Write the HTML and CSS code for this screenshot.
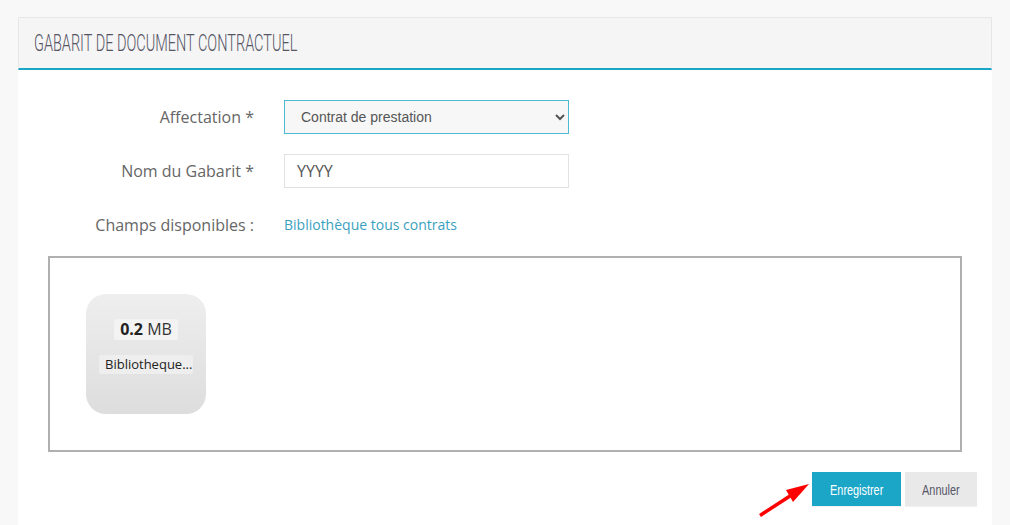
FILE: index.html
```html
<!DOCTYPE html>
<html lang="fr">
<head>
<meta charset="utf-8">
<title>Gabarit de document contractuel</title>
<link rel="stylesheet" href="styles.css">
</head>
<body>
<main class="panel">
  <header class="panel-head"><h1 class="panel-title">GABARIT DE DOCUMENT CONTRACTUEL</h1></header>
  <form class="panel-body">
    <div class="row">
      <label class="label">Affectation *</label>
      <select class="control select"><option>Contrat de prestation</option></select>
    </div>
    <div class="row">
      <label class="label">Nom du Gabarit *</label>
      <input class="control input" type="text" value="YYYY">
    </div>
    <div class="row">
      <span class="label">Champs disponibles :</span>
      <a class="link" href="#">Bibliothèque tous contrats</a>
    </div>
    <div class="dropzone">
      <div class="file">
        <div class="size"><strong>0.2</strong> MB</div>
        <div class="name">Bibliotheque...</div>
      </div>
    </div>
    <div class="actions">
      <svg class="arrow" width="54" height="42" viewBox="0 0 54 42" aria-hidden="true">
        <path d="M2 38.5 L32 19" stroke="#fe0000" stroke-width="3.5" fill="none"/>
        <path d="M51 7 L28 13 L35 25 Z" fill="#fe0000"/>
      </svg>
      <button class="btn btn-primary" type="button"><span class="btn-text">Enregistrer</span></button>
      <button class="btn btn-muted" type="button"><span class="btn-text">Annuler</span></button>
    </div>
  </form>
</main>
</body>
</html>
```
FILE: styles.css
```css
* { box-sizing: border-box; }
html, body { height: 100%; }
body {
  margin: 0;
  padding: 17px 18px 0;
  background: #f8f8f8;
  overflow: hidden;
  font-family: "Open Sans", sans-serif;
  color: #666;
}
.panel { background: #fff; height: 520px; }
.panel-head {
  height: 53px;
  padding: 0 15px;
  display: flex;
  align-items: center;
  background: #f5f5f5;
  border: 1px solid #e7e7e7;
  border-bottom: 2px solid #1ba6c7;
}
.panel-title {
  margin: 0;
  font-family: "Roboto", sans-serif;
  font-weight: 300;
  font-size: 23px;
  white-space: nowrap;
  color: #556;
  transform: scaleX(.63);
  transform-origin: left center;
}
.panel-body { padding: 30px 30px 0; }
.row {
  display: flex;
  align-items: center;
  height: 34px;
  margin-bottom: 20px;
}
.label {
  width: 206px;
  margin-right: 30px;
  text-align: right;
  font-size: 16px;
  color: #666;
}
.control {
  width: 285px;
  height: 34px;
  border-radius: 0;
  color: #555;
}
.select {
  padding: 0 0 0 12px;
  background: #f7f7f7;
  border: 1px solid #4db9d2;
  font-family: "Liberation Sans", sans-serif;
  font-size: 14px;
}
.input {
  padding: 0 12px;
  background: #fff;
  border: 1px solid #e2e2e2;
  font-family: "Open Sans", sans-serif;
  font-size: 16px;
}
.link {
  position: relative;
  top: -1px;
  color: #3a9fc0;
  font-size: 14px;
  text-decoration: none;
}
.dropzone {
  height: 196px;
  margin-top: -6px;
  padding: 36px;
  border: 2px solid #b0b0b0;
  background: #fff;
}
.file {
  width: 120px;
  height: 120px;
  padding-top: 25px;
  display: flex;
  flex-direction: column;
  align-items: center;
  border-radius: 20px;
  background: linear-gradient(#eeeeee, #dddddd);
  color: #333;
}
.size {
  padding: 0 6px;
  height: 21px;
  line-height: 21px;
  background: #f3f3f3;
  border-radius: 2px;
  font-size: 16px;
}
.size strong { color: #222; }
.name {
  margin-top: 15px;
  width: 94px;
  height: 19px;
  padding-left: 6px;
  line-height: 19px;
  background: #eeeeee;
  border-radius: 2px;
  font-size: 13px;
  color: #222;
  white-space: nowrap;
}
.actions {
  position: relative;
  display: flex;
  justify-content: flex-end;
  gap: 4px;
  margin-top: 20px;
  margin-right: -15px;
}
.btn {
  height: 34px;
  padding: 0;
  border: 0;
  border-radius: 0;
  font-family: "Liberation Sans", sans-serif;
  font-size: 15px;
  box-shadow: 0 1px 1px rgba(0,0,0,.05);
}
.btn-text {
  display: inline-block;
  transform: scaleX(.725);
}
.btn-primary { width: 89px; background: #1ba6c7; color: #fff; }
.btn-muted { width: 72px; background: #e9e9e9; color: #556; }
.arrow {
  position: absolute;
  right: 165px;
  top: 5px;
}
```
